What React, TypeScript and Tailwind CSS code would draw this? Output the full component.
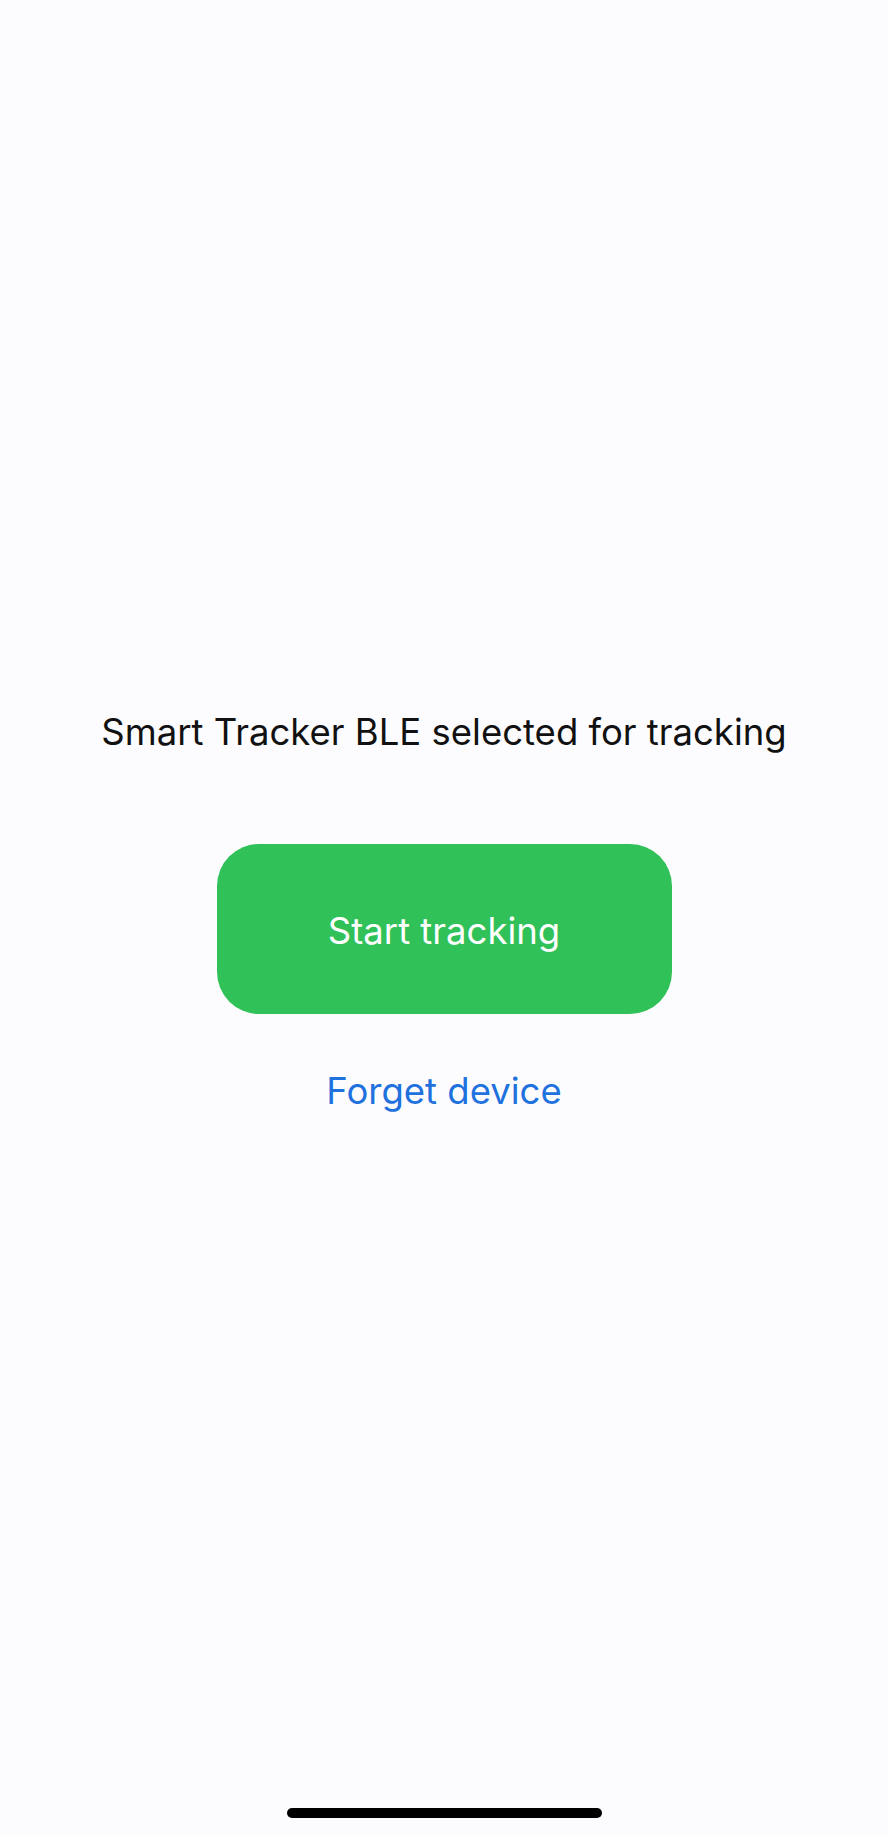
const App = () => {
  return (
    <div
      className="flex h-[1836px] w-full flex-col items-center bg-[#fcfcfe] text-[#111111]"
      style={{ fontFamily: "Inter, 'Noto Sans', sans-serif" }}
    >
      <p className="mt-[711px] text-[36.5px] leading-[42px]">
        Smart Tracker BLE selected for tracking
      </p>

      <button className="mt-[91px] flex h-[170px] w-[455px] items-center justify-center rounded-[42px] bg-[#30c159] pt-[4px] text-[36.5px] leading-[42px] text-white">
        Start tracking
      </button>

      <button className="mt-[56px] text-[36.5px] leading-[42px] text-[#1f71dd]">
        Forget device
      </button>

      <div className="flex-1" />

      <div className="mb-[18px] h-[10px] w-[315px] rounded-full bg-black" />
    </div>
  );
};

export default App;
